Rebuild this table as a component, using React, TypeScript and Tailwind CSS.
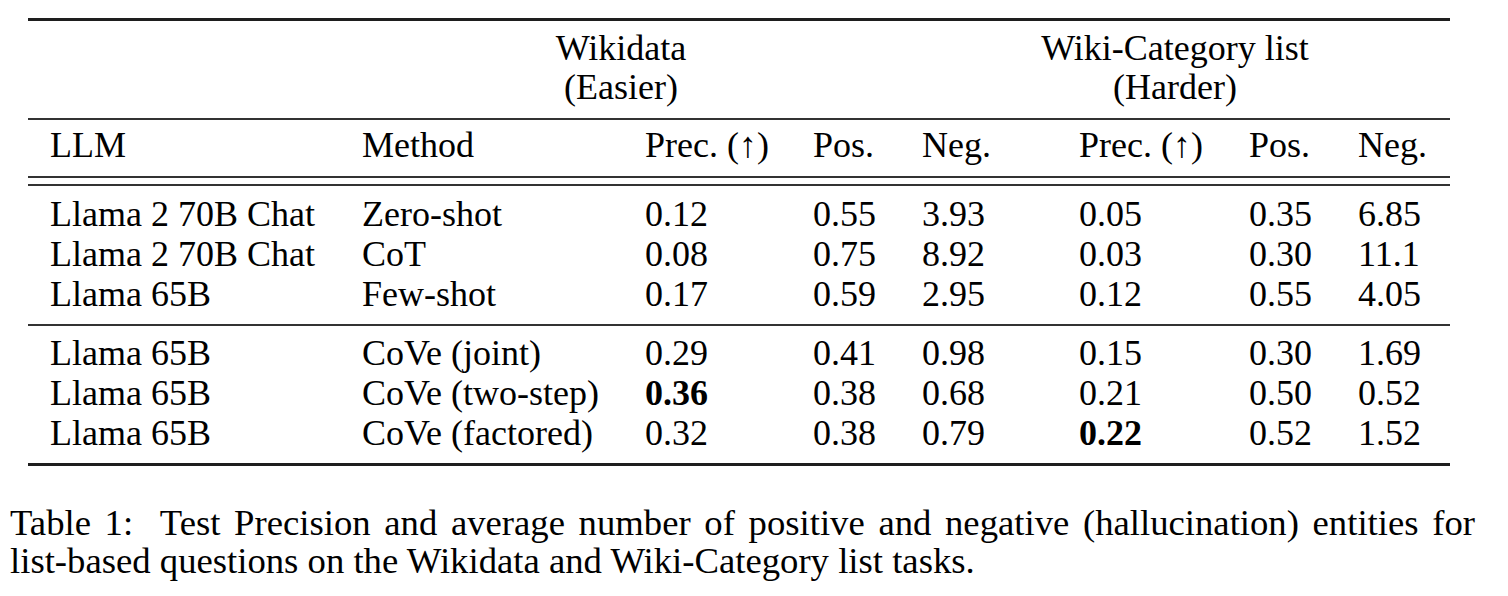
import React from "react";

const serif = { fontFamily: '"Liberation Serif", "Times New Roman", serif' };

type Cell = { t: string; b?: boolean };

const group1: Cell[][] = [
  [{ t: "Llama 2 70B Chat" }, { t: "Zero-shot" }, { t: "0.12" }, { t: "0.55" }, { t: "3.93" }, { t: "0.05" }, { t: "0.35" }, { t: "6.85" }],
  [{ t: "Llama 2 70B Chat" }, { t: "CoT" }, { t: "0.08" }, { t: "0.75" }, { t: "8.92" }, { t: "0.03" }, { t: "0.30" }, { t: "11.1" }],
  [{ t: "Llama 65B" }, { t: "Few-shot" }, { t: "0.17" }, { t: "0.59" }, { t: "2.95" }, { t: "0.12" }, { t: "0.55" }, { t: "4.05" }],
];

const group2: Cell[][] = [
  [{ t: "Llama 65B" }, { t: "CoVe (joint)" }, { t: "0.29" }, { t: "0.41" }, { t: "0.98" }, { t: "0.15" }, { t: "0.30" }, { t: "1.69" }],
  [{ t: "Llama 65B" }, { t: "CoVe (two-step)" }, { t: "0.36", b: true }, { t: "0.38" }, { t: "0.68" }, { t: "0.21" }, { t: "0.50" }, { t: "0.52" }],
  [{ t: "Llama 65B" }, { t: "CoVe (factored)" }, { t: "0.32" }, { t: "0.38" }, { t: "0.79" }, { t: "0.22", b: true }, { t: "0.52" }, { t: "1.52" }],
];

const headers = ["LLM", "Method", "Prec. (\u2191)", "Pos.", "Neg.", "Prec. (\u2191)", "Pos.", "Neg."];

function Row({ cells }: { cells: Cell[] }) {
  return (
    <div className="grid grid-cols-[312px_283px_168px_109px_157px_170px_109px_1fr] pl-[22px] h-[40px] leading-[40px] whitespace-nowrap">
      {cells.map((c, i) => (
        <div key={i} className={c.b ? "font-bold" : ""}>
          {c.t}
        </div>
      ))}
    </div>
  );
}

export default function App() {
  return (
    <div className="w-[1508px] h-[596px] bg-white text-black overflow-hidden text-[36px]" style={serif}>
      <div className="pt-[18px] ml-[28px] w-[1422px]">
        <div className="h-[3px] bg-[#1e1e1e]" />
        <div className="pt-[8px] flex leading-[39px] whitespace-nowrap">
          <div className="ml-[463px] w-[260px] text-center">
            <div>Wikidata</div>
            <div>(Easier)</div>
          </div>
          <div className="ml-[224px] w-[400px] text-center">
            <div>Wiki-Category list</div>
            <div>(Harder)</div>
          </div>
        </div>
        <div className="mt-[11px] h-[2px] bg-[#333]" />
        <div className="pt-[5px]">
          <Row cells={headers.map((t) => ({ t }))} />
        </div>
        <div className="mt-[11px] h-[2px] bg-[#333]" />
        <div className="mt-[6px] h-[2px] bg-[#333]" />
        <div className="pt-[8px]">
          {group1.map((r, i) => (
            <Row key={i} cells={r} />
          ))}
        </div>
        <div className="mt-[10px] h-[2px] bg-[#333]" />
        <div className="pt-[7px]">
          {group2.map((r, i) => (
            <Row key={i} cells={r} />
          ))}
        </div>
        <div className="mt-[10px] h-[3px] bg-[#1e1e1e]" />
      </div>
      <div className="mt-[38px] ml-[10px] w-[1465px] leading-[38px] text-justify text-[36.7px]">
        Table 1:&nbsp; Test Precision and average number of positive and negative (hallucination) entities for{" "}
        <span className="whitespace-nowrap">list-based</span> questions on the Wikidata and Wiki-Category list tasks.
      </div>
    </div>
  );
}
